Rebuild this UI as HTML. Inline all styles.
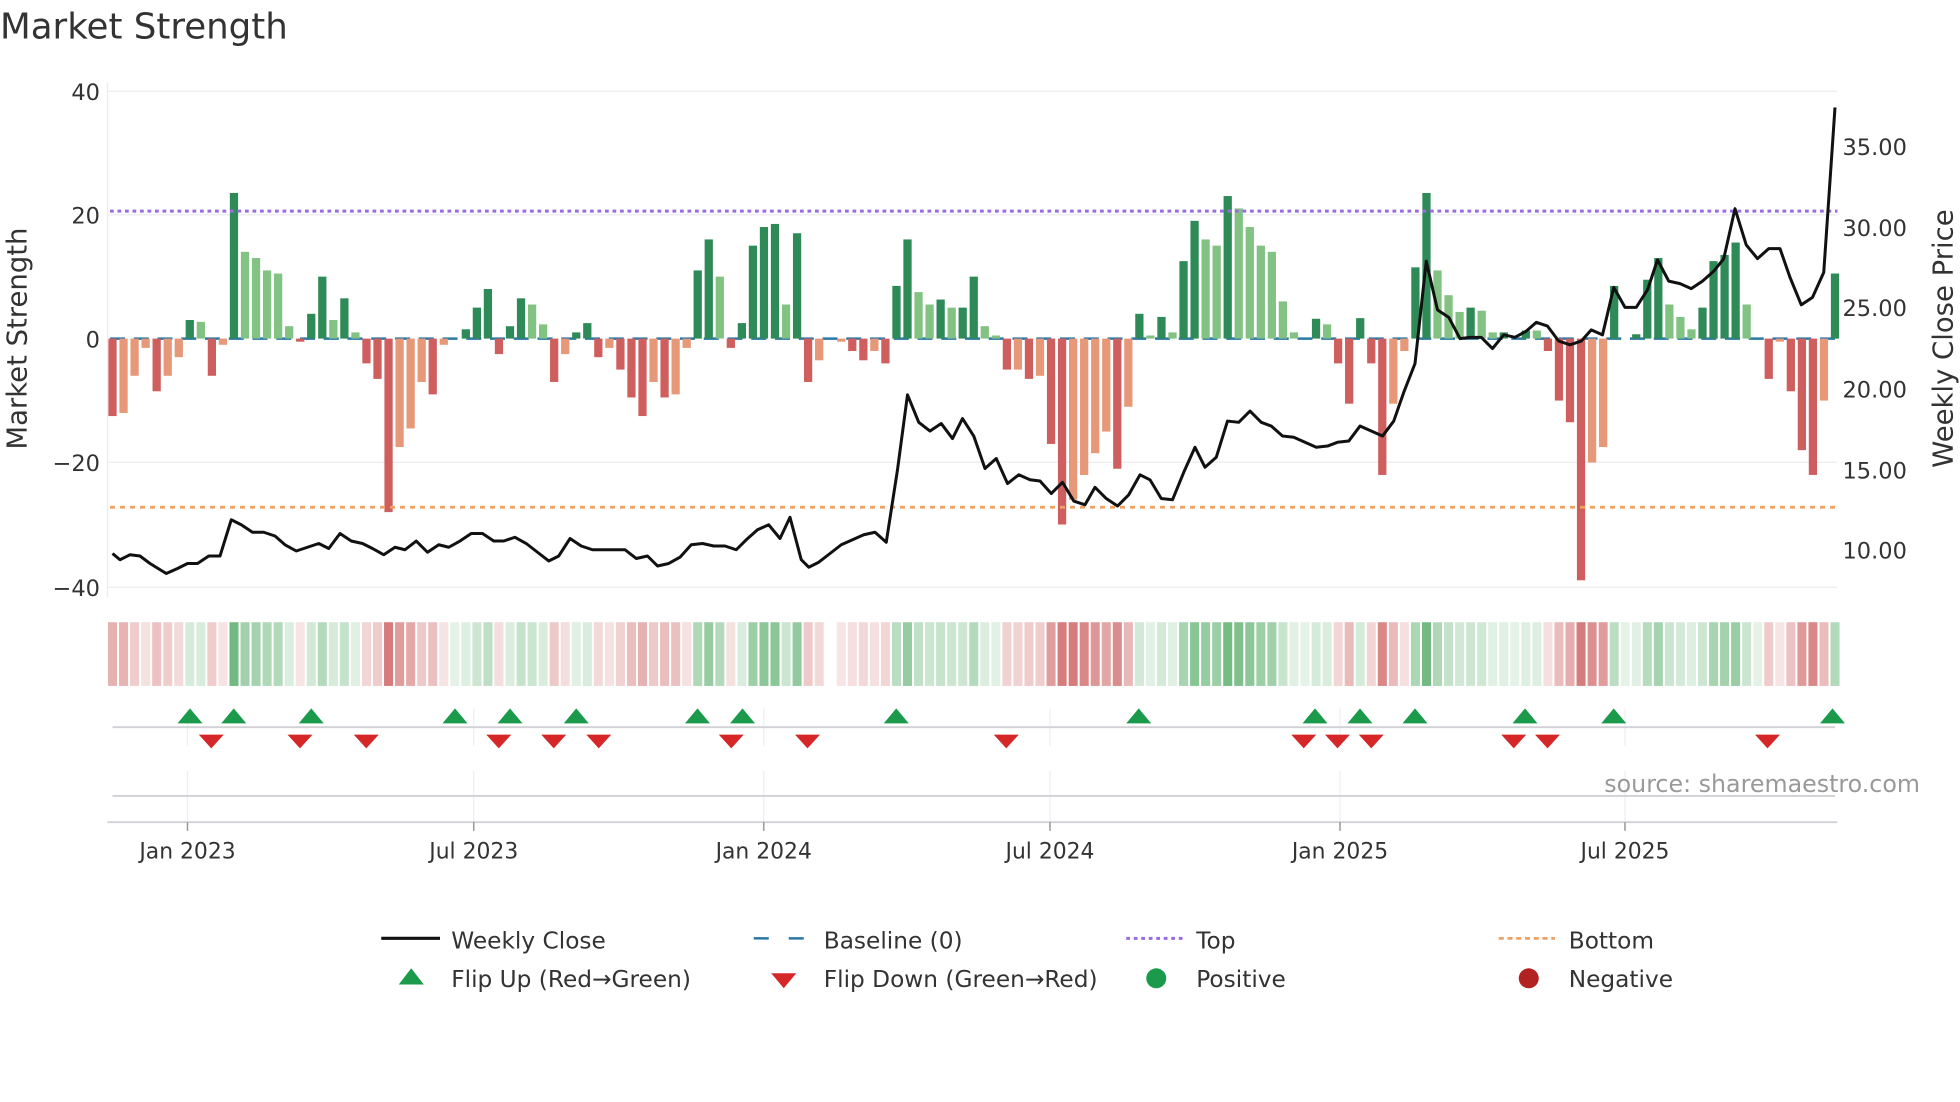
<!DOCTYPE html>
<html><head><meta charset="utf-8"><style>
html,body{margin:0;padding:0;background:#fff;}
svg{display:block;font-family:"DejaVu Sans","Liberation Sans",sans-serif;}
</style></head><body>
<svg id="s" width="1960" height="1102" viewBox="0 0 1568 882" preserveAspectRatio="none" xmlns="http://www.w3.org/2000/svg">
<rect width="1568" height="882" fill="#fff"/>
<text x="0" y="31" font-size="28.5" fill="#333">Market Strength</text>
<g stroke="#ececf0" stroke-width="1">
<line x1="86" y1="73" x2="1470" y2="73"/><line x1="86" y1="172" x2="1470" y2="172"/>
<line x1="86" y1="370" x2="1470" y2="370"/><line x1="86" y1="470" x2="1470" y2="470"/>
</g>
<line x1="86" y1="66" x2="86" y2="478" stroke="#ececf0"/>
<g font-size="18" fill="#333" text-anchor="end">
<text x="80" y="80">40</text><text x="80" y="179">20</text><text x="80" y="278">0</text>
<text x="80" y="377">−20</text><text x="80" y="477">−40</text>
</g>
<g font-size="18" fill="#333">
<text x="1474" y="124">35.00</text><text x="1474" y="189">30.00</text><text x="1474" y="253">25.00</text>
<text x="1474" y="318">20.00</text><text x="1474" y="383">15.00</text><text x="1474" y="447">10.00</text>
</g>
<text transform="translate(21,271) rotate(-90)" font-size="22" fill="#333" text-anchor="middle">Market Strength</text>
<text transform="translate(1562,271) rotate(-90)" font-size="22" fill="#333" text-anchor="middle">Weekly Close Price</text>
<line x1="88" y1="271" x2="1470" y2="271" stroke="#2a78a8" stroke-width="2" stroke-dasharray="12,7"/>
<g id="bars"></g>
<line x1="88" y1="169" x2="1470" y2="169" stroke="#9b6be0" stroke-width="2.4" stroke-dasharray="3,3"/>
<line x1="88" y1="406" x2="1470" y2="406" stroke="#f0a060" stroke-width="2.2" stroke-dasharray="4,4"/>
<polyline id="price" fill="none" stroke="#111" stroke-width="2.4" stroke-linejoin="round"/>
<g id="heat"></g>
<g stroke="#eceff3" stroke-width="1">
<line x1="150" y1="567" x2="150" y2="597"/><line x1="379" y1="567" x2="379" y2="597"/><line x1="611" y1="567" x2="611" y2="597"/><line x1="840" y1="567" x2="840" y2="597"/><line x1="1072" y1="567" x2="1072" y2="597"/><line x1="1300" y1="567" x2="1300" y2="597"/>
<line x1="150" y1="617" x2="150" y2="658"/><line x1="379" y1="617" x2="379" y2="658"/><line x1="611" y1="617" x2="611" y2="658"/><line x1="840" y1="617" x2="840" y2="658"/><line x1="1072" y1="617" x2="1072" y2="658"/><line x1="1300" y1="617" x2="1300" y2="658"/>
</g>
<line x1="90" y1="582" x2="1468" y2="582" stroke="#d0d0d5" stroke-width="1.5"/>
<line x1="90" y1="637" x2="1468" y2="637" stroke="#d0d0d5" stroke-width="1.5"/>
<line x1="86" y1="658" x2="1470" y2="658" stroke="#d0d0d5" stroke-width="1.5"/>
<g id="mk"></g>
<text x="1536" y="634" font-size="19" fill="#999" text-anchor="end">source: sharemaestro.com</text>
<g stroke="#999" stroke-width="1.2">
<line x1="150" y1="658" x2="150" y2="665"/><line x1="379" y1="658" x2="379" y2="665"/><line x1="611" y1="658" x2="611" y2="665"/><line x1="840" y1="658" x2="840" y2="665"/><line x1="1072" y1="658" x2="1072" y2="665"/><line x1="1300" y1="658" x2="1300" y2="665"/>
</g>
<g font-size="17.5" fill="#333" text-anchor="middle">
<text x="150" y="687">Jan 2023</text><text x="379" y="687">Jul 2023</text><text x="611" y="687">Jan 2024</text>
<text x="840" y="687">Jul 2024</text><text x="1072" y="687">Jan 2025</text><text x="1300" y="687">Jul 2025</text>
</g>
<g font-size="18.6" fill="#333">
<line x1="305" y1="751" x2="352" y2="751" stroke="#111" stroke-width="2.5"/>
<text x="361" y="759">Weekly Close</text>
<line x1="603" y1="751" x2="650" y2="751" stroke="#2a78a8" stroke-width="2" stroke-dasharray="12,16"/>
<text x="659" y="759">Baseline (0)</text>
<line x1="901" y1="751" x2="946" y2="751" stroke="#9b6be0" stroke-width="2.4" stroke-dasharray="3,3"/>
<text x="957" y="759">Top</text>
<line x1="1199" y1="751" x2="1244" y2="751" stroke="#f0a060" stroke-width="2.2" stroke-dasharray="4,3"/>
<text x="1255" y="759">Bottom</text>
<polygon points="319,788 329,775 339,788" fill="#1a9a4a"/>
<text x="361" y="790">Flip Up (Red→Green)</text>
<polygon points="617,779 637,779 627,791" fill="#d62728"/>
<text x="659" y="790">Flip Down (Green→Red)</text>
<circle cx="925" cy="783" r="8" fill="#1a9a4a"/>
<text x="957" y="790">Positive</text>
<circle cx="1223" cy="783" r="8" fill="#b22222"/>
<text x="1255" y="790">Negative</text>
</g>
</svg>
<script>
var NS="http://www.w3.org/2000/svg";
function el(p,t,a){var e=document.createElementNS(NS,t);for(var k in a)e.setAttribute(k,a[k]);p.appendChild(e);return e;}
var B="-12.5d -12l -6l -1.5l -8.5d -6l -3l 3d 2.7l -6d -1l 23.5d 14l 13l 11l 10.5l 2l -0.5d 4d 10d 3l 6.5d 1l -4d -6.5d -28d -17.5l -14.5l -7l -9d -1l 0l 1.5d 5d 8d -2.5d 2d 6.5d 5.5l 2.3l -7d -2.5l 1d 2.5d -3d -1.5l -5d -9.5d -12.5d -7l -9.5d -9l -1.5l 11d 16d 10l -1.5d 2.5d 15d 18d 18.5d 5.5l 17d -7d -3.5l 0l -0.5l -2d -3.5d -2l -4d 8.5d 16d 7.5l 5.5l 6.3d 5l 5d 10d 2l 0.5l -5d -5l -6.5d -6l -17d -30d -26l -22l -18.5l -15l -21d -11l 4d 0.5l 3.5d 1l 12.5d 19d 16l 15l 23d 21l 18l 15l 14l 6l 1l 0l 3.2d 2.3l -4d -10.5d 3.3d -4d -22d -10.5l -2l 11.5d 23.5d 11l 7l 4.3l 5d 4.5l 1l 1d 0l 1.3d 1.3l -2d -10d -13.5d -39d -20l -17.5l 8.5d 0l 0.7d 9.5d 13d 5.5l 3.5l 1.5l 5d 12.5d 13.5d 15.5d 5.5l 0l -6.5d -0.5l -8.5d -18d -22d -10l 10.5d".split(" ");
var n=B.length,x0=90,x1=1468,dx=(x1-x0)/(n-1);
var gb=document.getElementById("bars"),gh=document.getElementById("heat");
B.forEach(function(s,i){
 var v=parseFloat(s),t=s.slice(-1),x=x0+i*dx,y0=271,h=v*4.96;
 var c=v>=0?(t=="d"?"#2e8a57":"#82c283"):(t=="d"?"#cf5f5e":"#e69878");
 if(Math.abs(v)>0.05)el(gb,"rect",{x:x-3.3,y:v>0?y0-h:y0,width:6.6,height:Math.abs(h),fill:c});
 if(i==65)return;
 var a=Math.min(1,0.18+Math.abs(v)/30);
 var col=v>=0?"rgba(60,160,80,"+(a*0.75)+")":"rgba(200,80,80,"+(a*0.75)+")";
 el(gh,"rect",{x:x-4.4+0.8,y:498,width:dx-1.6,height:51,fill:col});
});
var P="90,443 96,448 104,444 112,445 120,451 133,459 142,455 150,451 158,451 167,445 176,445 185,416 193,420 202,426 211,426 220,429 228,436 237,441 246,438 255,435 263,439 272,427 281,433 290,435 298,439 307,444 316,438 324,440 333,433 342,442 351,436 359,438 368,433 377,427 386,427 395,433 403,433 412,430 421,435 430,442 439,449 447,445 456,431 465,437 474,440 483,440 491,440 500,440 509,447 518,445 526,453 535,451 544,446 553,436 562,435 571,437 580,437 589,440 597,432 606,424 615,420 624,431 632,414 641,448 647,454 655,450 664,443 673,436 682,432 691,428 700,426 709,434 718,376 726,316 735,338 744,345 753,339 762,351 770,335 779,349 788,375 797,367 806,387 815,380 824,384 832,385 841,395 850,386 859,401 868,404 876,390 885,399 894,405 903,396 912,380 920,384 929,399 938,400 947,378 956,358 964,374 973,366 982,337 991,338 1000,329 1009,338 1017,341 1026,349 1035,350 1044,354 1053,358 1062,357 1070,354 1079,353 1088,341 1097,345 1106,349 1115,337 1123,314 1132,291 1141,209 1150,248 1159,254 1168,271 1176,270 1185,270 1194,279 1203,268 1212,270 1221,265 1229,258 1238,261 1247,273 1256,276 1265,273 1273,264 1282,268 1291,230 1300,246 1309,246 1318,232 1326,208 1335,225 1344,227 1353,231 1362,225 1371,217 1379,207 1388,167 1397,196 1406,207 1415,199 1424,199 1432,222 1441,244 1450,238 1459,218 1468,86";
document.getElementById("price").setAttribute("points",P);
var mk=document.getElementById("mk");
[152,187,249,364,408,461,558,594,717,911,1052,1088,1132,1220,1291,1466].forEach(function(x){el(mk,"polygon",{points:(x-10)+",579 "+x+",567 "+(x+10)+",579",fill:"#1a9a4a"});});
[169,240,293,399,443,479,585,646,805,1043,1070,1097,1211,1238,1414].forEach(function(x){el(mk,"polygon",{points:(x-10)+",588 "+(x+10)+",588 "+x+",599",fill:"#d62728"});});
</script>
</body></html>
